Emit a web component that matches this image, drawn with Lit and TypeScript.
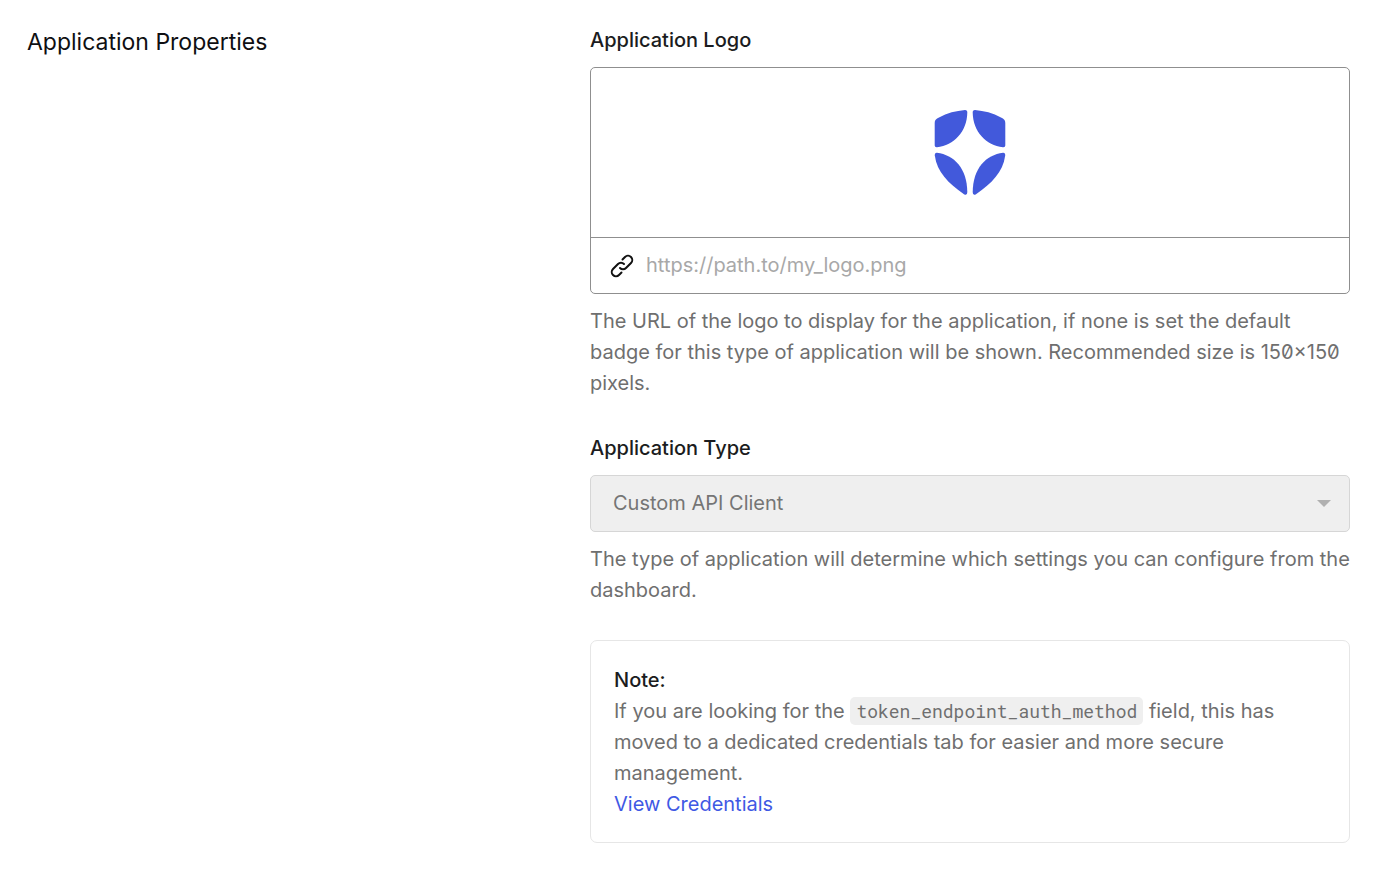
import { LitElement, html, css } from "lit";
import { customElement } from "lit/decorators.js";

@customElement("app-root")
export class AppRoot extends LitElement {
  static styles = css`
    :host {
      display: block;
      box-sizing: border-box;
      min-height: 100vh;
      background: #fff;
      color: #1b1c20;
      font-family: Inter, "Liberation Sans", sans-serif;
      font-size: 20px;
      line-height: 31px;
      font-feature-settings: "zero";
    }
    * { box-sizing: border-box; }
    .page {
      display: grid;
      grid-template-columns: 523fr 760fr;
      gap: 40px;
      padding: 25px 42px 27px 27px;
    }
    h2 { margin: 0; font-size: 23px; line-height: 34px; font-weight: 400; color: #0e0f12; }
    .fields { display: flex; flex-direction: column; min-width: 0; }
    .field { display: flex; flex-direction: column; margin-bottom: 34px; }
    label { font-weight: 500; }
    .logo-box { margin: 11px 0 12px; border: 1px solid #8f8f8f; border-radius: 5px; overflow: hidden; }
    .preview { display: flex; align-items: center; justify-content: center; height: 170px; border-bottom: 1px solid #8f8f8f; }
    .mark { display: block; width: 72px; height: 86px; }
    .url { display: flex; align-items: center; height: 55px; padding: 0 19px; gap: 12px; }
    .url svg { flex: none; }
    input {
      flex: 1; min-width: 0; padding: 0; border: 0; outline: 0; background: none;
      color: #1b1c20; font: inherit;
    }
    input::placeholder { color: #a8a8a8; opacity: 1; }
    p { margin: 0; color: #6f6f6f; }
    .select { display: grid; margin: 11px 0 12px; }
    .select > * { grid-area: 1 / 1; }
    select {
      appearance: none; width: 100%; height: 57px; padding: 0 22px;
      border: 1px solid #d6d6d6; border-radius: 5px; background: #efefef;
      color: #757575; opacity: 1; font: inherit;
    }
    .arrow { align-self: center; justify-self: end; margin-right: 19px; pointer-events: none; }
    .note { padding: 24px 23px 22px; border: 1px solid #e6e6e6; border-radius: 7px; }
    .note strong { display: block; font-weight: 500; }
    code {
      padding: 2px 6px; border-radius: 5px; background: #efefef;
      font-family: "Roboto Mono", "Liberation Mono", monospace; font-size: 18px; line-height: 20px;
    }
    a { color: #3f59e4; text-decoration: none; }
  `;

  render() {
    return html`
      <main class="page">
        <h2>Application Properties</h2>
        <div class="fields">
          <div class="field">
            <label for="logo">Application Logo</label>
            <div class="logo-box">
              <div class="preview">
                <svg class="mark" viewBox="0 0 72 86" fill="#4259db" aria-hidden="true">
                  <path id="upper" d="M.7 13C.7 10 2 9 5 7.500C13 3 22 .8 31 0Q33.500 0 33.300 2.500C33 22 20 35 3 37.300Q.7 37.500 .7 35.500Z" />
                  <path id="lower" d="M3 42.700C20 45 33 58 33.300 82Q33.300 86 30 84.300C14 73 3 62 .8 45.500Q.6 42.500 3 42.700Z" />
                  <use href="#upper" transform="matrix(-1 0 0 1 72 0)" />
                  <use href="#lower" transform="matrix(-1 0 0 1 72 0)" />
                </svg>
              </div>
              <div class="url">
                <svg width="24" height="24" viewBox="0 0 24 24" fill="none" stroke="#111" stroke-width="2" stroke-linecap="round" stroke-linejoin="round" aria-hidden="true">
                  <path d="M12.500 5.500L15 3A4.240 4.240 0 0 1 21 9L16 14A4.240 4.240 0 0 1 10 14" />
                  <path d="M11.500 18.500L9 21A4.240 4.240 0 0 1 3 15L8 10A4.240 4.240 0 0 1 14 10" />
                </svg>
                <input id="logo" type="url" placeholder="https://path.to/my_logo.png" />
              </div>
            </div>
            <p>The URL of the logo to display for the application, if none is set the default badge for this type of application will be shown. Recommended size is 150×150 pixels.</p>
          </div>
          <div class="field">
            <label for="type">Application Type</label>
            <div class="select">
              <select id="type" disabled><option>Custom API Client</option></select>
              <svg class="arrow" width="14" height="7" viewBox="0 0 14 7" fill="#b0b0b0" aria-hidden="true"><path d="M0 0h14L7 7z" /></svg>
            </div>
            <p>The type of application will determine which settings you can configure from the dashboard.</p>
          </div>
          <section class="note">
            <strong>Note:</strong>
            <p>If you are looking for the <code>token_endpoint_auth_method</code> field, this has moved to a dedicated credentials tab for easier and more secure management.</p>
            <a href="#credentials">View Credentials</a>
          </section>
        </div>
      </main>
    `;
  }
}
